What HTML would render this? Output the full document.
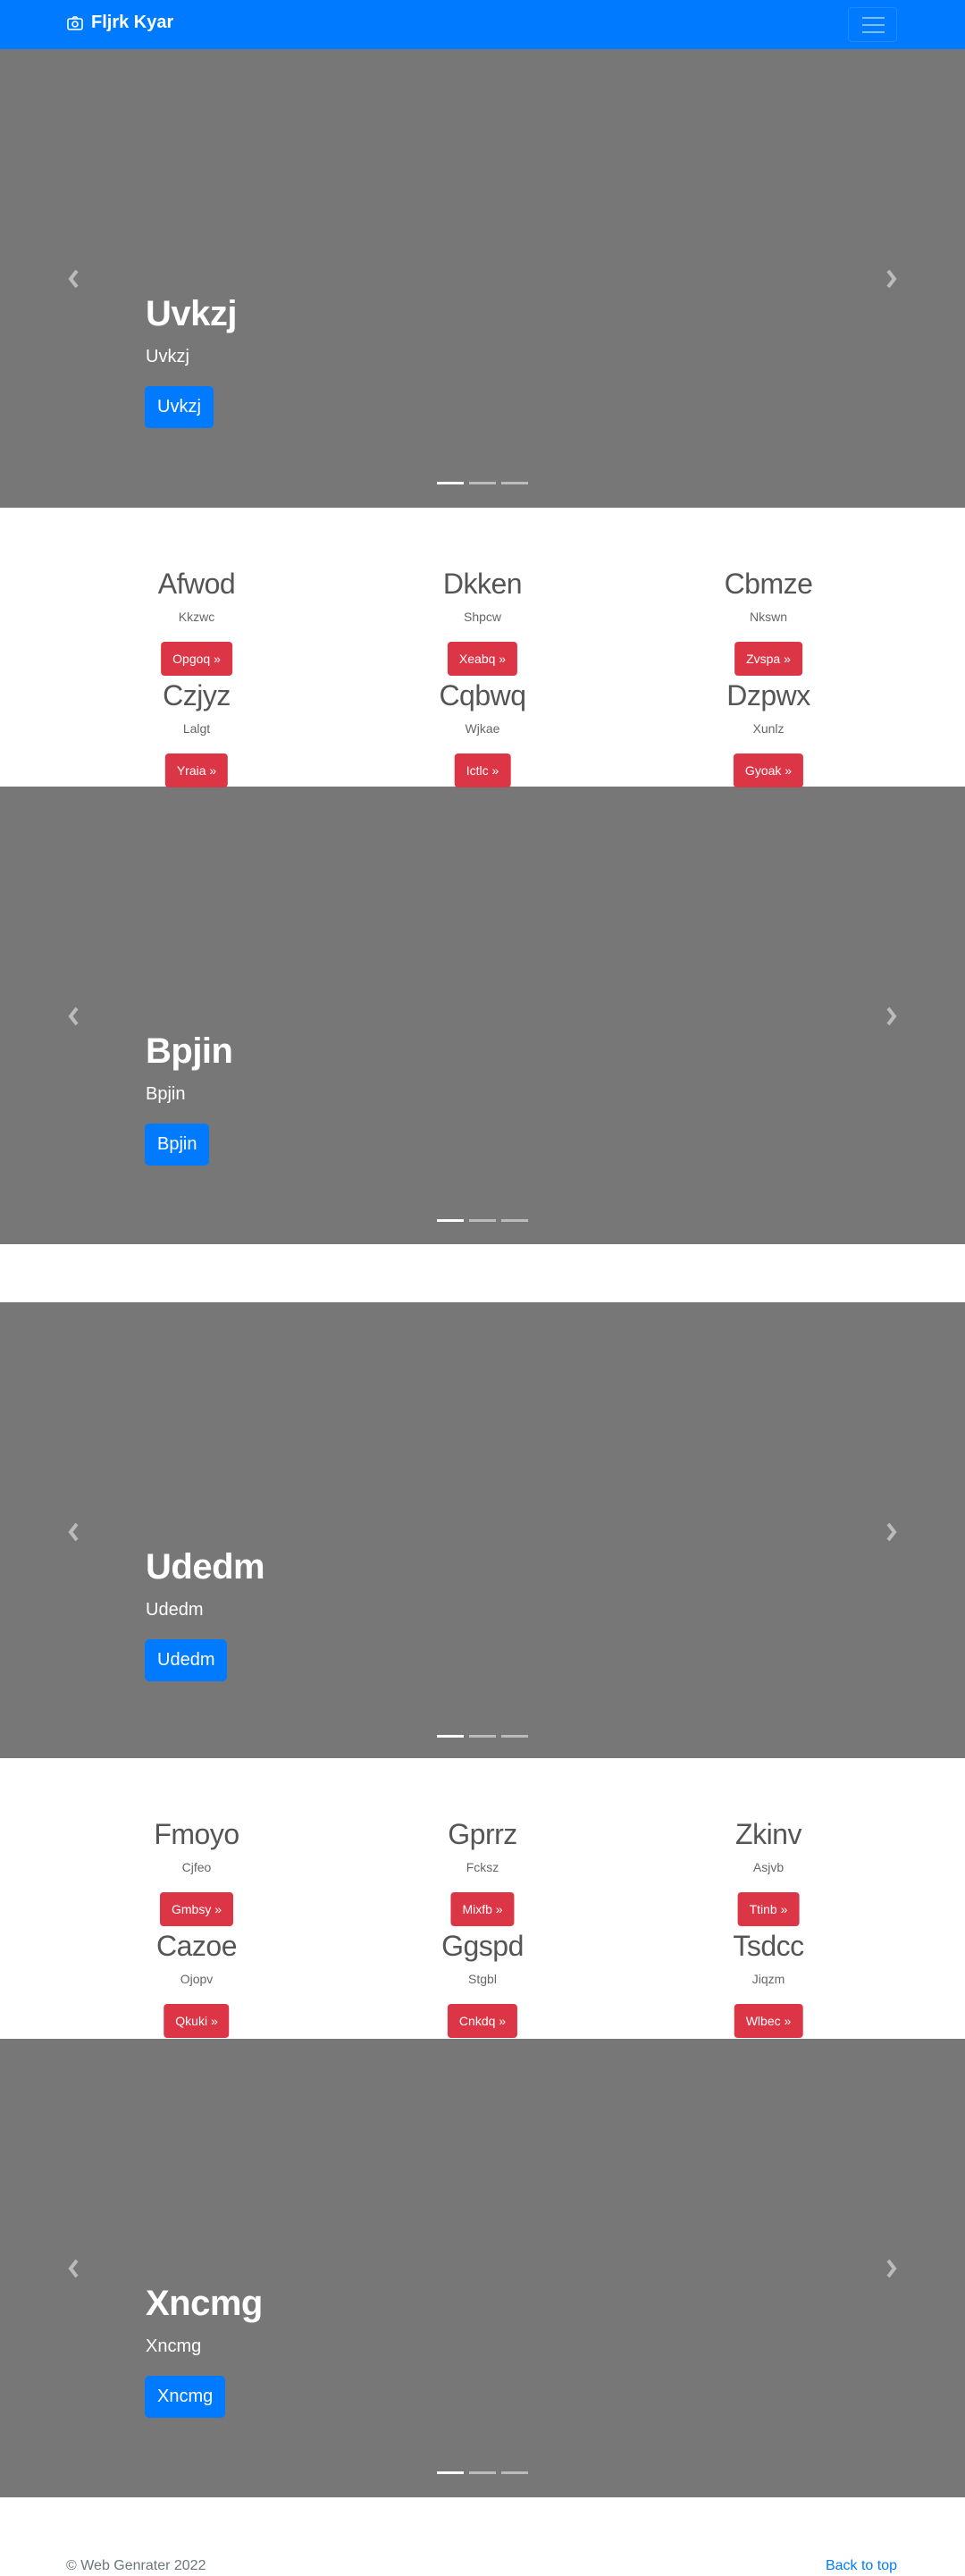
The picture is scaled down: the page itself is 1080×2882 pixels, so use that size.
<!DOCTYPE html>
<html><head><meta charset="utf-8">
<style>
*{margin:0;padding:0;box-sizing:border-box}
body{width:1080px;height:2882px;position:relative;background:#fff;font-family:"Liberation Sans",sans-serif;overflow:hidden}
.abs{position:absolute}
.nav{left:0;top:0;width:1080px;height:55px;background:#007bff}
.brand{left:74px;top:14px;color:#fff;font-weight:bold;font-size:20px;display:flex;align-items:center;gap:8px}
.tog{left:949px;top:8px;width:55px;height:39px;border:1px solid rgba(255,255,255,.12);border-radius:4px}
.tog i{position:absolute;left:15px;width:25px;height:2px;background:rgba(255,255,255,.5)}
.car{left:0;width:1080px;background:#777}
.arr{top:246px}
.ttl{left:163px;top:274px;color:#fff;font-size:40px;font-weight:bold;letter-spacing:-0.5px}
.sub{left:163px;top:333px;color:#fff;font-size:20px}
.bb{left:162px;top:377px;height:47px;background:#007bff;color:#fff;font-size:20px;border-radius:5px;padding:0 14px;line-height:47px}
.ind{top:484px;width:30px;height:3px;background:rgba(255,255,255,.5)}
.col{width:360px;text-align:center;color:#555}
.h{font-size:32px;font-weight:500;position:absolute;width:360px;text-align:center;line-height:40px;letter-spacing:-0.5px}
.s{font-size:14px;position:absolute;width:360px;text-align:center;color:#666}
.rb{position:absolute;height:38px;line-height:38px;background:#dc3545;color:#fff;font-size:14px;border-radius:4px;padding:0 13px;left:50%;transform:translateX(-50%);white-space:nowrap}
.foot{top:2862px;font-size:16px}
</style></head><body>
<div class="abs nav"></div>
<div class="abs brand"><svg width="20" height="20" viewBox="0 0 20 20" fill="none" stroke="#fff" stroke-width="1.6"><rect x="2" y="5" width="16" height="12" rx="2"/><path d="M7 5l1.5-2h3L13 5"/><circle cx="10" cy="11" r="3"/></svg>Fljrk Kyar</div>
<div class="abs tog"><i style="top:10px"></i><i style="top:18px"></i><i style="top:26px"></i></div>

<!-- carousels -->
<div class="abs car" style="top:55px;height:513px">
<svg class="abs arr" style="left:74px" width="16" height="22" viewBox="0 0 16 22"><path d="M12 2L5 11l7 9" stroke="#bbb" stroke-width="4" fill="none"/></svg><svg class="abs arr" style="left:990px" width="16" height="22" viewBox="0 0 16 22"><path d="M4 2l7 9-7 9" stroke="#bbb" stroke-width="4" fill="none"/></svg>
<div class="abs ttl">Uvkzj</div><div class="abs sub">Uvkzj</div><div class="abs bb">Uvkzj</div>
<div class="abs ind" style="left:489px;background:#fff"></div><div class="abs ind" style="left:525px"></div><div class="abs ind" style="left:561px"></div>
</div>
<div class="abs car" style="top:880px;height:512px">
<svg class="abs arr" style="left:74px" width="16" height="22" viewBox="0 0 16 22"><path d="M12 2L5 11l7 9" stroke="#bbb" stroke-width="4" fill="none"/></svg><svg class="abs arr" style="left:990px" width="16" height="22" viewBox="0 0 16 22"><path d="M4 2l7 9-7 9" stroke="#bbb" stroke-width="4" fill="none"/></svg>
<div class="abs ttl">Bpjin</div><div class="abs sub">Bpjin</div><div class="abs bb">Bpjin</div>
<div class="abs ind" style="left:489px;background:#fff"></div><div class="abs ind" style="left:525px"></div><div class="abs ind" style="left:561px"></div>
</div>
<div class="abs car" style="top:1457px;height:510px">
<svg class="abs arr" style="left:74px" width="16" height="22" viewBox="0 0 16 22"><path d="M12 2L5 11l7 9" stroke="#bbb" stroke-width="4" fill="none"/></svg><svg class="abs arr" style="left:990px" width="16" height="22" viewBox="0 0 16 22"><path d="M4 2l7 9-7 9" stroke="#bbb" stroke-width="4" fill="none"/></svg>
<div class="abs ttl">Udedm</div><div class="abs sub">Udedm</div><div class="abs bb">Udedm</div>
<div class="abs ind" style="left:489px;background:#fff"></div><div class="abs ind" style="left:525px"></div><div class="abs ind" style="left:561px"></div>
</div>
<div class="abs car" style="top:2281px;height:513px">
<svg class="abs arr" style="left:74px" width="16" height="22" viewBox="0 0 16 22"><path d="M12 2L5 11l7 9" stroke="#bbb" stroke-width="4" fill="none"/></svg><svg class="abs arr" style="left:990px" width="16" height="22" viewBox="0 0 16 22"><path d="M4 2l7 9-7 9" stroke="#bbb" stroke-width="4" fill="none"/></svg>
<div class="abs ttl">Xncmg</div><div class="abs sub">Xncmg</div><div class="abs bb">Xncmg</div>
<div class="abs ind" style="left:489px;background:#fff"></div><div class="abs ind" style="left:525px"></div><div class="abs ind" style="left:561px"></div>
</div>

<!-- features 1 -->
<div class="abs" style="top:568px;left:0;width:1080px;height:312px">
<div class="abs col" style="left:40px">
<div class="h" style="top:65px">Afwod</div><div class="s" style="top:114px">Kkzwc</div><div class="rb" style="top:150px">Opgoq »</div>
<div class="h" style="top:190px">Czjyz</div><div class="s" style="top:239px">Lalgt</div><div class="rb" style="top:275px">Yraia »</div></div>
<div class="abs col" style="left:360px">
<div class="h" style="top:65px">Dkken</div><div class="s" style="top:114px">Shpcw</div><div class="rb" style="top:150px">Xeabq »</div>
<div class="h" style="top:190px">Cqbwq</div><div class="s" style="top:239px">Wjkae</div><div class="rb" style="top:275px">Ictlc »</div></div>
<div class="abs col" style="left:680px">
<div class="h" style="top:65px">Cbmze</div><div class="s" style="top:114px">Nkswn</div><div class="rb" style="top:150px">Zvspa »</div>
<div class="h" style="top:190px">Dzpwx</div><div class="s" style="top:239px">Xunlz</div><div class="rb" style="top:275px">Gyoak »</div></div>
</div>

<!-- features 2 -->
<div class="abs" style="top:1967px;left:0;width:1080px;height:314px">
<div class="abs col" style="left:40px">
<div class="h" style="top:65px">Fmoyo</div><div class="s" style="top:114px">Cjfeo</div><div class="rb" style="top:150px">Gmbsy »</div>
<div class="h" style="top:190px">Cazoe</div><div class="s" style="top:239px">Ojopv</div><div class="rb" style="top:275px">Qkuki »</div></div>
<div class="abs col" style="left:360px">
<div class="h" style="top:65px">Gprrz</div><div class="s" style="top:114px">Fcksz</div><div class="rb" style="top:150px">Mixfb »</div>
<div class="h" style="top:190px">Ggspd</div><div class="s" style="top:239px">Stgbl</div><div class="rb" style="top:275px">Cnkdq »</div></div>
<div class="abs col" style="left:680px">
<div class="h" style="top:65px">Zkinv</div><div class="s" style="top:114px">Asjvb</div><div class="rb" style="top:150px">Ttinb »</div>
<div class="h" style="top:190px">Tsdcc</div><div class="s" style="top:239px">Jiqzm</div><div class="rb" style="top:275px">Wlbec »</div></div>
</div>

<div class="abs foot" style="left:74px;color:#6c757d">© Web Genrater 2022</div>
<div class="abs foot" style="right:76px;color:#007bff">Back to top</div>
</body></html>
